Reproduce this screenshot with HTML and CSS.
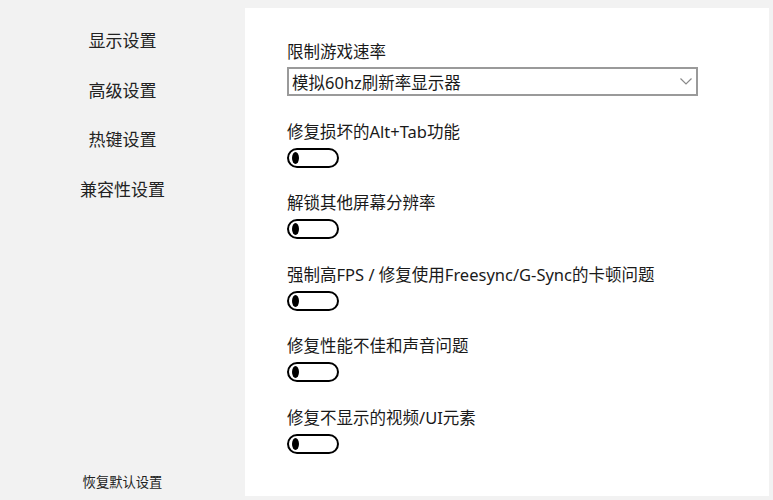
FILE: index.html
```html
<!DOCTYPE html>
<html lang="zh-CN">
<head>
<meta charset="utf-8">
<title>设置</title>
<link rel="stylesheet" href="styles.css">
</head>
<body>
<div class="app">
  <nav class="sidebar">
    <ul class="nav">
      <li>显示设置</li>
      <li>高级设置</li>
      <li>热键设置</li>
      <li>兼容性设置</li>
    </ul>
    <div class="reset">恢复默认设置</div>
  </nav>
  <main class="panel">
    <div class="field first">
      <div class="label">限制游戏速率</div>
      <div class="select">
        <span>模拟60hz刷新率显示器</span>
        <svg class="chev" width="12" height="7" viewBox="0 0 12 7"><path d="M0.5 0.5 L6 6 L11.5 0.5" fill="none" stroke="#8a8a8a" stroke-width="1.2"/></svg>
      </div>
    </div>
    <div class="field">
      <div class="label">修复损坏的Alt+Tab功能</div>
      <div class="toggle"><span class="thumb"></span></div>
    </div>
    <div class="field">
      <div class="label">解锁其他屏幕分辨率</div>
      <div class="toggle"><span class="thumb"></span></div>
    </div>
    <div class="field">
      <div class="label">强制高FPS / 修复使用Freesync/G-Sync的卡顿问题</div>
      <div class="toggle"><span class="thumb"></span></div>
    </div>
    <div class="field">
      <div class="label">修复性能不佳和声音问题</div>
      <div class="toggle"><span class="thumb"></span></div>
    </div>
    <div class="field">
      <div class="label">修复不显示的视频/UI元素</div>
      <div class="toggle"><span class="thumb"></span></div>
    </div>
  </main>
</div>
</body>
</html>
```
FILE: styles.css
```css
html, body {
  margin: 0;
  padding: 0;
  background: #f2f2f2;
  font-family: "Noto Sans", "Noto Sans CJK SC", sans-serif;
  color: #1a1a1a;
}
.app {
  display: flex;
  width: 773px;
  height: 500px;
}
.sidebar {
  width: 245px;
  flex: none;
  display: flex;
  flex-direction: column;
  align-items: center;
}
.nav {
  list-style: none;
  margin: 0;
  padding: 29px 0 0;
  display: flex;
  flex-direction: column;
  align-items: center;
  gap: 25.5px;
}
.nav li {
  font-size: 17px;
  line-height: 24px;
  color: #222;
}
.reset {
  margin-top: auto;
  margin-bottom: 9px;
  font-size: 13.3px;
  line-height: 18px;
  color: #222;
}
.panel {
  flex: 1;
  background: #fff;
  margin: 8px 4px 4px 0;
  padding: 32px 0 0 42px;
  display: flex;
  flex-direction: column;
  gap: 23.5px;
}
.label {
  font-size: 16.5px;
  line-height: 24px;
  color: #1a1a1a;
}
.select {
  margin-top: 3px;
  border: 2px solid #9a9a9a;
  display: flex;
  align-items: center;
  justify-content: space-between;
  padding: 0 4px 0 3px;
  box-sizing: border-box;
  width: 411px;
  height: 29px;
  font-size: 16.5px;
}
.toggle {
  margin-top: 4px;
  width: 48px;
  height: 16px;
  border: 2px solid #000;
  border-radius: 10px;
  position: relative;
}
.thumb {
  position: absolute;
  left: 3px;
  top: 2px;
  width: 7px;
  height: 12px;
  border-radius: 50%;
  background: #000;
}
```
